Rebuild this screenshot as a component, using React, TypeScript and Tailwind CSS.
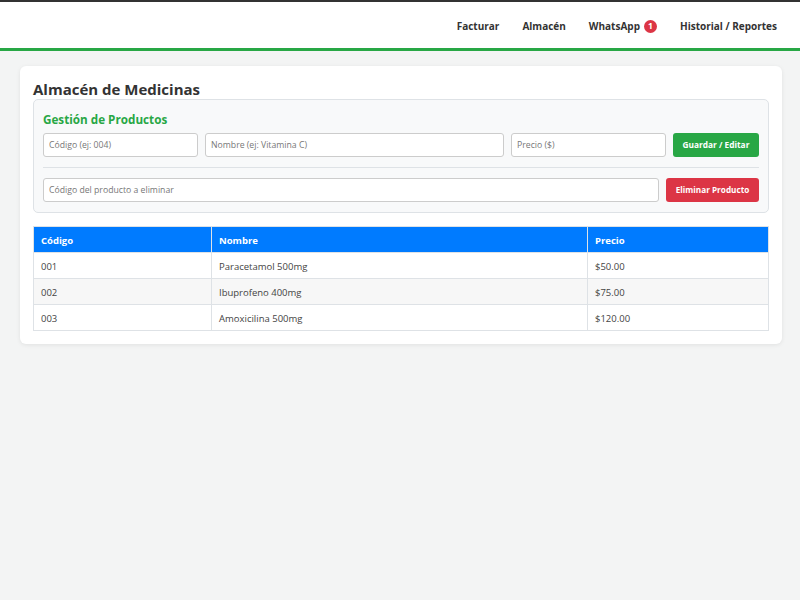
import React from "react";

const rows = [
  ["001", "Paracetamol 500mg", "$50.00"],
  ["002", "Ibuprofeno 400mg", "$75.00"],
  ["003", "Amoxicilina 500mg", "$120.00"],
];

export default function App() {
  return (
    <div className="min-h-[600px] bg-[#f3f4f4] font-['Open_Sans',sans-serif] text-[#333]">
      <nav className="h-[51px] bg-white border-t-2 border-t-[#333] border-b-[3px] border-b-[#28a745] flex items-center justify-end pr-[23px] pt-[3px]">
        <div className="flex items-center gap-[23px] text-[10px] font-bold text-[#333]">
          <span>Facturar</span>
          <span>Almacén</span>
          <span className="flex items-center gap-[4px]">
            WhatsApp
            <span className="w-[13px] h-[13px] rounded-full bg-[#dc3545] text-white text-[8.5px] flex items-center justify-center leading-none">1</span>
          </span>
          <span>Historial / Reportes</span>
        </div>
      </nav>
      <div className="pl-[20px] pr-[18px] pt-[15px]">
        <div className="bg-white rounded-[6px] shadow-[0_1px_4px_rgba(0,0,0,0.08)] px-[13px] pt-[13px] pb-[13px]">
          <h2 className="text-[15px] font-bold leading-[20px] text-[#333]">Almacén de Medicinas</h2>
          <div className="bg-[#f8f9fa] border border-[#dee2e6] rounded-[5px] px-[9px] pt-[9px] pb-[10px]">
            <h3 className="text-[11.7px] font-bold text-[#28a745] leading-[20px] mb-[4px]">Gestión de Productos</h3>
            <div className="flex gap-[7px] items-center">
              <input className="w-[155px] h-[24px] bg-white border border-[#ccc] rounded-[3px] px-[5px] text-[8.7px] placeholder:text-[#777]" placeholder="Código (ej: 004)" />
              <input className="flex-1 h-[24px] bg-white border border-[#ccc] rounded-[3px] px-[5px] text-[8.7px] placeholder:text-[#777]" placeholder="Nombre (ej: Vitamina C)" />
              <input className="w-[155px] h-[24px] bg-white border border-[#ccc] rounded-[3px] px-[5px] text-[8.7px] placeholder:text-[#777]" placeholder="Precio ($)" />
              <button className="w-[86px] h-[24px] bg-[#28a745] text-white text-[8.3px] font-bold rounded-[3px]">Guardar / Editar</button>
            </div>
            <div className="border-t border-[#dee2e6] my-[10px]"></div>
            <div className="flex gap-[7px] items-center">
              <input className="flex-1 h-[24px] bg-white border border-[#ccc] rounded-[3px] px-[5px] text-[8.7px] placeholder:text-[#777]" placeholder="Código del producto a eliminar" />
              <button className="w-[93px] h-[24px] bg-[#dc3545] text-white text-[8.2px] font-bold rounded-[3px]">Eliminar Producto</button>
            </div>
          </div>
          <table className="w-full mt-[13px] border-collapse text-[9.5px]">
            <thead>
              <tr className="bg-[#007bff] text-white font-bold h-[26px]">
                <th className="text-left font-bold px-[7px] pt-[3px] w-[178px] border border-[#dee2e6]">Código</th>
                <th className="text-left font-bold px-[7px] pt-[3px] w-[376px] border border-[#dee2e6]">Nombre</th>
                <th className="text-left font-bold px-[7px] pt-[3px] border border-[#dee2e6]">Precio</th>
              </tr>
            </thead>
            <tbody>
              {rows.map((r, i) => (
                <tr key={r[0]} className={`h-[26px] text-[#444] ${i % 2 === 1 ? "bg-[#f7f7f7]" : "bg-white"}`}>
                  <td className="px-[7px] pt-[3px] border border-[#dee2e6]">{r[0]}</td>
                  <td className="px-[7px] pt-[3px] border border-[#dee2e6]">{r[1]}</td>
                  <td className="px-[7px] pt-[3px] border border-[#dee2e6]">{r[2]}</td>
                </tr>
              ))}
            </tbody>
          </table>
        </div>
      </div>
    </div>
  );
}
